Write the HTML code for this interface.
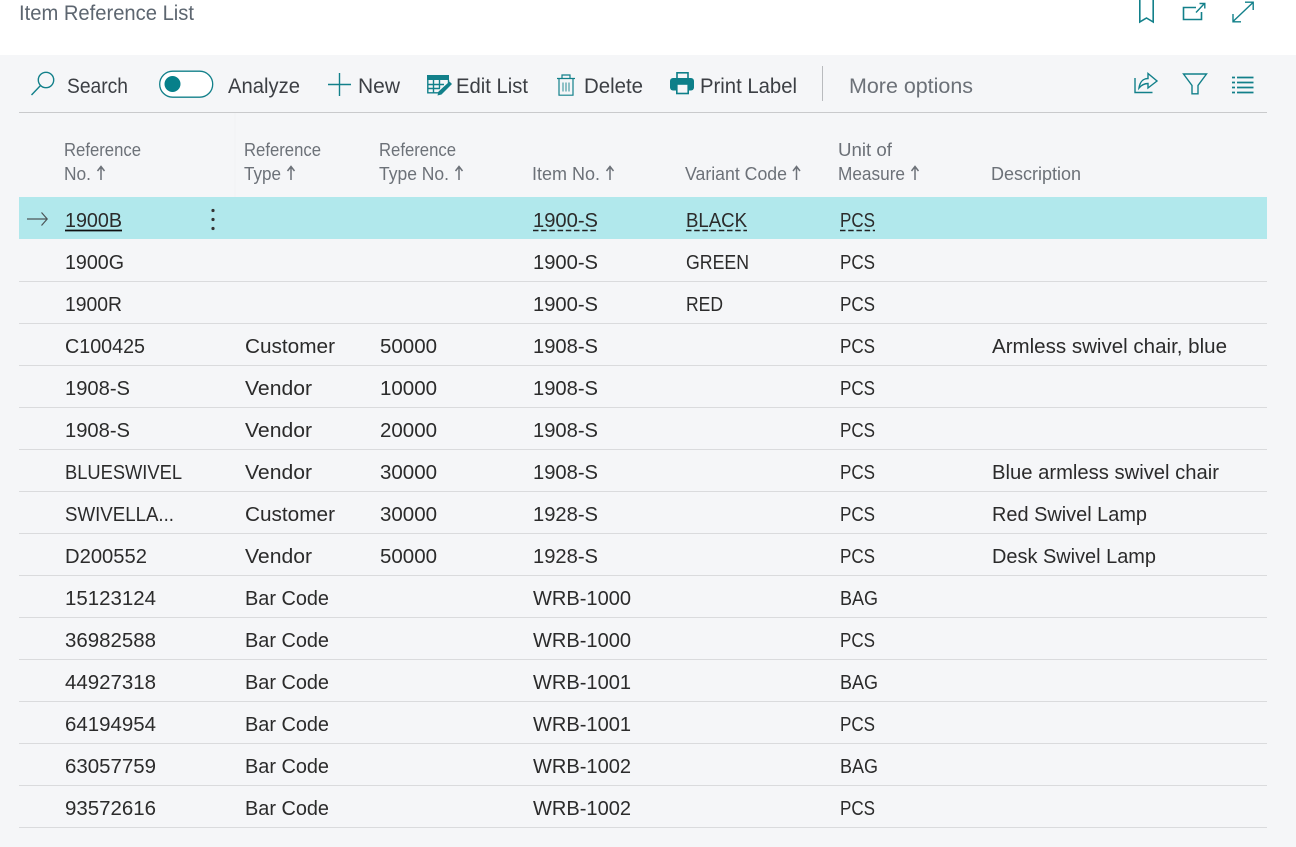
<!DOCTYPE html>
<html><head><meta charset="utf-8"><title>Item Reference List</title>
<style>
html,body{margin:0;padding:0;background:#f5f6f8;width:1296px;height:847px;overflow:hidden}
svg{display:block;position:absolute;left:0;top:0}
text{font-family:"Liberation Sans",sans-serif}
.c text{font-size:20px;fill:#2b2b2b}
.h text{font-size:18px;fill:#6c7178}
.t text{font-size:21px;fill:#3c3f44}
.l{stroke:#dadbdd;stroke-width:1}
.i{fill:none;stroke:#12808a;stroke-width:1.4}
.a{fill:none;stroke:#6c7178;stroke-width:1.5}
</style></head><body>
<svg width="1296" height="847" viewBox="0 0 1296 847" xmlns="http://www.w3.org/2000/svg">
<rect x="0" y="0" width="1296" height="55" fill="#fff"/>
<text x="19" y="20" font-size="21" fill="#5d6670" textLength="175" lengthAdjust="spacingAndGlyphs">Item Reference List</text>

<!-- top right icons -->
<path class="i" style="stroke-width:1.6" d="M1139.8 0V22L1146.5 18L1153.2 22V0"/>
<path class="i" style="stroke-width:1.6" d="M1196 7.5H1183.5V19.5H1201.5V12"/>
<path class="i" d="M1196 12.5L1204 4M1199.5 3.5H1204.8V8.5"/>
<path class="i" d="M1233 21.5L1253 2.5M1233 14V21.8H1241M1245 2.2H1253.2V10"/>

<!-- toolbar -->
<path class="i" d="M41 85L31.5 95"/><circle class="i" cx="46" cy="80" r="7.7"/>
<rect x="159.7" y="71.2" width="53" height="26" rx="13" fill="#fff" stroke="#12808a" stroke-width="1.3"/>
<circle cx="172.5" cy="84" r="8" fill="#07808a"/>
<path class="i" d="M328 84.5H351M339.5 73V96"/>

<!-- edit list -->
<path d="M427 75H449V80H427Z" fill="#12808a"/>
<path class="i" d="M427.8 80V92.8H441M427.8 84.5H444M427.8 88.5H440M433.5 80V92.8M439.5 80V88M448.5 80V83"/>
<path d="M449.5 81.5L452 84L441.5 94.5L437.5 95.5L438.5 91.5Z" fill="#12808a"/>

<!-- trash -->
<path class="i" style="stroke-width:1.2" d="M557 78.5H575M562 78.5V75H570V78.5M559 78.5V95.2H573V78.5"/>
<path class="i" style="stroke-width:0.9" d="M563 82.5V91.5M566 82.5V91.5M569 82.5V91.5"/>

<!-- printer -->
<rect x="670" y="78" width="24" height="12.5" rx="3" fill="#0d7f89"/>
<rect x="677" y="72.8" width="11" height="6" fill="#f5f6f8" stroke="#0d7f89" stroke-width="1.6"/>
<rect x="676.8" y="84" width="11.4" height="9.5" fill="#f5f6f8" stroke="#0d7f89" stroke-width="1.6"/>

<path d="M822.5 66V101" stroke="#b9bbbe" stroke-width="1"/>

<!-- share -->
<path class="i" d="M1135 78V92.5H1152.5"/>
<path class="i" d="M1139 88C1140 81 1144 78.5 1148 78.5V73.5L1157 81L1148 88V83.5C1144.5 83.5 1141.5 85 1139 88Z"/>
<!-- filter -->
<path class="i" d="M1183.5 74H1206.5L1198 85.5V93.8H1192V85.5Z"/>
<!-- list -->
<path d="M1237 77.5H1253.5M1237 82.5H1253.5M1237 87.5H1253.5M1237 92.500H1253.5" stroke="#12808a" stroke-width="1.7" fill="none"/>
<path d="M1232 77.5H1235M1232 82.5H1235M1232 87.5H1235M1232 92.5H1235" stroke="#12808a" stroke-width="1.7" fill="none"/>

<g class="t">
<text x="67" y="93" textLength="61" lengthAdjust="spacingAndGlyphs">Search</text>
<text x="228" y="93" textLength="72" lengthAdjust="spacingAndGlyphs">Analyze</text>
<text x="358" y="93" textLength="42" lengthAdjust="spacingAndGlyphs">New</text>
<text x="456" y="93" textLength="72" lengthAdjust="spacingAndGlyphs">Edit List</text>
<text x="584" y="93" textLength="59" lengthAdjust="spacingAndGlyphs">Delete</text>
<text x="700" y="93" textLength="97" lengthAdjust="spacingAndGlyphs">Print Label</text>
<text x="849" y="93" textLength="124" lengthAdjust="spacingAndGlyphs" style="fill:#6c7178">More options</text>
</g>

<path d="M19 112.5H1267" stroke="#c9cacc" stroke-width="1"/>
<path d="M235 113V197" stroke="#f1f2f4" stroke-width="1"/>

<!-- header -->
<g class="h">
<text x="64" y="156" textLength="77" lengthAdjust="spacingAndGlyphs">Reference</text>
<text x="64" y="180" textLength="27" lengthAdjust="spacingAndGlyphs">No.</text>
<text x="244" y="156" textLength="77" lengthAdjust="spacingAndGlyphs">Reference</text>
<text x="244" y="180" textLength="37" lengthAdjust="spacingAndGlyphs">Type</text>
<text x="379" y="156" textLength="77" lengthAdjust="spacingAndGlyphs">Reference</text>
<text x="379" y="180" textLength="70" lengthAdjust="spacingAndGlyphs">Type No.</text>
<text x="532" y="180" textLength="68" lengthAdjust="spacingAndGlyphs">Item No.</text>
<text x="685" y="180" textLength="102" lengthAdjust="spacingAndGlyphs">Variant Code</text>
<text x="838" y="156" textLength="54" lengthAdjust="spacingAndGlyphs">Unit of</text>
<text x="838" y="180" textLength="67" lengthAdjust="spacingAndGlyphs">Measure</text>
<text x="991" y="180" textLength="90" lengthAdjust="spacingAndGlyphs">Description</text>
</g>
<path class="a" d="M101 180V167M97.5 171L101 166.5L104.5 171"/>
<path class="a" d="M291 180V167M287.5 171L291 166.5L294.5 171"/>
<path class="a" d="M459 180V167M455.5 171L459 166.5L462.5 171"/>
<path class="a" d="M610 180V167M606.5 171L610 166.5L613.5 171"/>
<path class="a" d="M796.5 180V167M793 171L796.5 166.5L800 171"/>
<path class="a" d="M915 180V167M911.5 171L915 166.5L918.5 171"/>

<!-- selected row -->
<rect x="19" y="197" width="1248" height="42" fill="#b1e8ec"/>
<path d="M27 219H47M41.5 212.5L47.2 219L41.5 225.5" fill="none" stroke="#4c5457" stroke-width="1.2"/>
<circle cx="213" cy="210.5" r="1.6" fill="#333"/><circle cx="213" cy="219.5" r="1.6" fill="#333"/><circle cx="213" cy="228.5" r="1.6" fill="#333"/>
<path d="M65 230.5H122" stroke="#111" stroke-width="1.8"/>
<path d="M533 230.5H598M686 230.5H747M840 230.5H875" stroke="#222" stroke-width="1.5" stroke-dasharray="5.5 2.7"/>

<!-- row lines -->
<path class="l" d="M19 281.5H1267M19 323.5H1267M19 365.5H1267M19 407.5H1267M19 449.5H1267M19 491.5H1267M19 533.5H1267M19 575.5H1267M19 617.5H1267M19 659.5H1267M19 701.5H1267M19 743.5H1267M19 785.5H1267M19 827.5H1267"/>

<g class="c">
<text x="65" y="227" textLength="57" lengthAdjust="spacingAndGlyphs">1900B</text>
<text x="533" y="227" textLength="65" lengthAdjust="spacingAndGlyphs">1900-S</text>
<text x="686" y="227" textLength="61" lengthAdjust="spacingAndGlyphs">BLACK</text>
<text x="840" y="227" textLength="35" lengthAdjust="spacingAndGlyphs">PCS</text>

<text x="65" y="269" textLength="59" lengthAdjust="spacingAndGlyphs">1900G</text>
<text x="533" y="269" textLength="65" lengthAdjust="spacingAndGlyphs">1900-S</text>
<text x="686" y="269" textLength="63" lengthAdjust="spacingAndGlyphs">GREEN</text>
<text x="840" y="269" textLength="35" lengthAdjust="spacingAndGlyphs">PCS</text>

<text x="65" y="311" textLength="57" lengthAdjust="spacingAndGlyphs">1900R</text>
<text x="533" y="311" textLength="65" lengthAdjust="spacingAndGlyphs">1900-S</text>
<text x="686" y="311" textLength="37" lengthAdjust="spacingAndGlyphs">RED</text>
<text x="840" y="311" textLength="35" lengthAdjust="spacingAndGlyphs">PCS</text>

<text x="65" y="353" textLength="80" lengthAdjust="spacingAndGlyphs">C100425</text>
<text x="245" y="353" textLength="90" lengthAdjust="spacingAndGlyphs">Customer</text>
<text x="380" y="353" textLength="57" lengthAdjust="spacingAndGlyphs">50000</text>
<text x="533" y="353" textLength="65" lengthAdjust="spacingAndGlyphs">1908-S</text>
<text x="840" y="353" textLength="35" lengthAdjust="spacingAndGlyphs">PCS</text>
<text x="992" y="353" textLength="235" lengthAdjust="spacingAndGlyphs">Armless swivel chair, blue</text>

<text x="65" y="395" textLength="65" lengthAdjust="spacingAndGlyphs">1908-S</text>
<text x="245" y="395" textLength="67" lengthAdjust="spacingAndGlyphs">Vendor</text>
<text x="380" y="395" textLength="57" lengthAdjust="spacingAndGlyphs">10000</text>
<text x="533" y="395" textLength="65" lengthAdjust="spacingAndGlyphs">1908-S</text>
<text x="840" y="395" textLength="35" lengthAdjust="spacingAndGlyphs">PCS</text>

<text x="65" y="437" textLength="65" lengthAdjust="spacingAndGlyphs">1908-S</text>
<text x="245" y="437" textLength="67" lengthAdjust="spacingAndGlyphs">Vendor</text>
<text x="380" y="437" textLength="57" lengthAdjust="spacingAndGlyphs">20000</text>
<text x="533" y="437" textLength="65" lengthAdjust="spacingAndGlyphs">1908-S</text>
<text x="840" y="437" textLength="35" lengthAdjust="spacingAndGlyphs">PCS</text>

<text x="65" y="479" textLength="117" lengthAdjust="spacingAndGlyphs">BLUESWIVEL</text>
<text x="245" y="479" textLength="67" lengthAdjust="spacingAndGlyphs">Vendor</text>
<text x="380" y="479" textLength="57" lengthAdjust="spacingAndGlyphs">30000</text>
<text x="533" y="479" textLength="65" lengthAdjust="spacingAndGlyphs">1908-S</text>
<text x="840" y="479" textLength="35" lengthAdjust="spacingAndGlyphs">PCS</text>
<text x="992" y="479" textLength="227" lengthAdjust="spacingAndGlyphs">Blue armless swivel chair</text>

<text x="65" y="521" textLength="109" lengthAdjust="spacingAndGlyphs">SWIVELLA...</text>
<text x="245" y="521" textLength="90" lengthAdjust="spacingAndGlyphs">Customer</text>
<text x="380" y="521" textLength="57" lengthAdjust="spacingAndGlyphs">30000</text>
<text x="533" y="521" textLength="65" lengthAdjust="spacingAndGlyphs">1928-S</text>
<text x="840" y="521" textLength="35" lengthAdjust="spacingAndGlyphs">PCS</text>
<text x="992" y="521" textLength="155" lengthAdjust="spacingAndGlyphs">Red Swivel Lamp</text>

<text x="65" y="563" textLength="82" lengthAdjust="spacingAndGlyphs">D200552</text>
<text x="245" y="563" textLength="67" lengthAdjust="spacingAndGlyphs">Vendor</text>
<text x="380" y="563" textLength="57" lengthAdjust="spacingAndGlyphs">50000</text>
<text x="533" y="563" textLength="65" lengthAdjust="spacingAndGlyphs">1928-S</text>
<text x="840" y="563" textLength="35" lengthAdjust="spacingAndGlyphs">PCS</text>
<text x="992" y="563" textLength="164" lengthAdjust="spacingAndGlyphs">Desk Swivel Lamp</text>

<text x="65" y="605" textLength="91" lengthAdjust="spacingAndGlyphs">15123124</text>
<text x="245" y="605" textLength="84" lengthAdjust="spacingAndGlyphs">Bar Code</text>
<text x="533" y="605" textLength="98" lengthAdjust="spacingAndGlyphs">WRB-1000</text>
<text x="840" y="605" textLength="38" lengthAdjust="spacingAndGlyphs">BAG</text>

<text x="65" y="647" textLength="91" lengthAdjust="spacingAndGlyphs">36982588</text>
<text x="245" y="647" textLength="84" lengthAdjust="spacingAndGlyphs">Bar Code</text>
<text x="533" y="647" textLength="98" lengthAdjust="spacingAndGlyphs">WRB-1000</text>
<text x="840" y="647" textLength="35" lengthAdjust="spacingAndGlyphs">PCS</text>

<text x="65" y="689" textLength="91" lengthAdjust="spacingAndGlyphs">44927318</text>
<text x="245" y="689" textLength="84" lengthAdjust="spacingAndGlyphs">Bar Code</text>
<text x="533" y="689" textLength="98" lengthAdjust="spacingAndGlyphs">WRB-1001</text>
<text x="840" y="689" textLength="38" lengthAdjust="spacingAndGlyphs">BAG</text>

<text x="65" y="731" textLength="91" lengthAdjust="spacingAndGlyphs">64194954</text>
<text x="245" y="731" textLength="84" lengthAdjust="spacingAndGlyphs">Bar Code</text>
<text x="533" y="731" textLength="98" lengthAdjust="spacingAndGlyphs">WRB-1001</text>
<text x="840" y="731" textLength="35" lengthAdjust="spacingAndGlyphs">PCS</text>

<text x="65" y="773" textLength="91" lengthAdjust="spacingAndGlyphs">63057759</text>
<text x="245" y="773" textLength="84" lengthAdjust="spacingAndGlyphs">Bar Code</text>
<text x="533" y="773" textLength="98" lengthAdjust="spacingAndGlyphs">WRB-1002</text>
<text x="840" y="773" textLength="38" lengthAdjust="spacingAndGlyphs">BAG</text>

<text x="65" y="815" textLength="91" lengthAdjust="spacingAndGlyphs">93572616</text>
<text x="245" y="815" textLength="84" lengthAdjust="spacingAndGlyphs">Bar Code</text>
<text x="533" y="815" textLength="98" lengthAdjust="spacingAndGlyphs">WRB-1002</text>
<text x="840" y="815" textLength="35" lengthAdjust="spacingAndGlyphs">PCS</text>
</g>
</svg>
</body></html>
